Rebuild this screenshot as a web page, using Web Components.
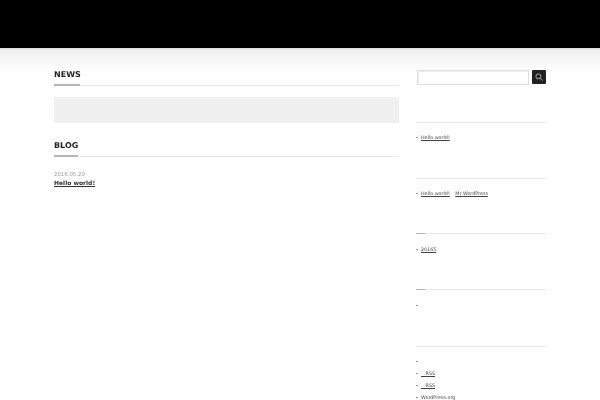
<!DOCTYPE html>
<html><head><meta charset="utf-8"><style>
html,body{margin:0;padding:0;background:#fff;height:400px;overflow:hidden}
body{font-family:"DejaVu Sans",sans-serif;color:#333}
</style></head><body>
<site-header></site-header>
<page-layout>
  <div slot="main">
    <section-heading bar="26">NEWS</section-heading>
    <empty-box></empty-box>
    <section-heading bar="24" style="margin-top:17px">BLOG</section-heading>
    <blog-entry date="2016.05.20">Hello world!</blog-entry>
  </div>
  <div slot="side">
    <search-box></search-box>
    <side-widget height="56" top="37"><side-item>Hello world!</side-item></side-widget>
    <side-widget height="55"><side-item also="Mr WordPress">Hello world!</side-item></side-widget>
    <side-widget height="56" mark pad="11"><side-item>20165</side-item></side-widget>
    <side-widget height="57" mark pad="11"><side-item></side-item></side-widget>
    <side-widget pad="10"><side-item></side-item><side-item>&nbsp;&nbsp;&nbsp;RSS</side-item><side-item>&nbsp;&nbsp;&nbsp;RSS</side-item><side-item>WordPress.org</side-item></side-widget>
  </div>
</page-layout>
<script>
function def(name, css, html, setup){
  customElements.define(name, class extends HTMLElement{
    connectedCallback(){
      if(this.shadowRoot) return;
      const r=this.attachShadow({mode:'open'});
      r.innerHTML='<style>'+css+'</style>'+html;
      if(setup) setup(this,r);
    }
  });
}
def('site-header',`:host{display:block}
.bar{height:48px;background:#000;border-bottom:1px solid #ddd}
.fade{height:22px;background:linear-gradient(#eeeeee,#fff)}`,`<div class="bar"></div><div class="fade"></div>`);
def('page-layout',`:host{display:flex;justify-content:space-between;width:492px;margin:-2px 0 0 54px;height:331px;overflow:hidden;align-items:flex-start}
.m{width:345px;display:block}.s{width:130px;margin-right:-1px;margin-top:1px}`,
`<div class="m"><slot name="main"></slot></div><div class="s"><slot name="side"></slot></div>`);
def('section-heading',`:host{display:block;text-rendering:geometricPrecision}
h2{margin:0;font:bold 8px/10px "DejaVu Sans",sans-serif;color:#222;box-sizing:border-box;height:15px;padding-top:1px;filter:blur(.2px)}
.l{display:flex;height:2px}
.a{background:#b5b5b5}.b{flex:1;height:1px;background:#e6e6e6;margin-top:1px}`,
`<h2><slot></slot></h2><div class="l"><div class="a"></div><div class="b"></div></div>`,
(h,r)=>{r.querySelector('.a').style.width=h.getAttribute('bar')+'px'});
def('empty-box',`:host{display:block;height:26px;margin-top:11px;background:#f0f0f0}`,'');
def('blog-entry',`:host{display:block;margin-top:13px;text-rendering:geometricPrecision;filter:blur(.2px)}
time{display:block;font:5.4px/10px "DejaVu Sans",sans-serif;color:#999}
a{display:block;font:bold 6px/8px "DejaVu Sans",sans-serif;color:#333;text-decoration:underline}`,
`<time></time><a><slot></slot></a>`,(h,r)=>{r.querySelector('time').textContent=h.getAttribute('date')});
def('search-box',`:host{display:flex;justify-content:space-between;align-items:flex-start;height:15px;width:130px}
.i{box-sizing:border-box;width:112px;height:15px;border:1px solid #ddd;box-shadow:inset 1px 1px 0 #eee;background:#fff}
.b{width:14px;height:14px;margin-right:1px;background:#222;border-radius:1px;display:flex;align-items:center;justify-content:center}`,
`<div class="i"></div><div class="b"><svg width="8" height="8" viewBox="0 0 9 9" fill="none" stroke="#ddd" stroke-width=".8"><circle cx="3.8" cy="3.8" r="2.8"/><path d="M5.9 5.9L8.5 8.5"/></svg></div>`);
def('side-widget',`:host{display:block;box-sizing:border-box}
.l{display:flex;height:1px;margin-left:-1px}.a{width:10px}.b{flex:1;background:#e6e6e6}
.c{padding-top:10px}`,
`<div class="l"><div class="a"></div><div class="b"></div></div><div class="c"><slot></slot></div>`,
(h,r)=>{
  if(h.hasAttribute('height')) h.style.height=h.getAttribute('height')+'px';
  if(h.hasAttribute('top')) h.style.marginTop=h.getAttribute('top')+'px';
  if(h.hasAttribute('pad')) r.querySelector('.c').style.paddingTop=h.getAttribute('pad')+'px';
  r.querySelector('.a').style.background=h.hasAttribute('mark')?'#b5b5b5':'#e6e6e6';
});
def('side-item',`:host{display:block;height:12px;font:4.8px/12px "DejaVu Sans",sans-serif;color:#444;text-rendering:geometricPrecision;filter:blur(.2px)}
.d{display:inline-block;width:2px;height:1px;background:#999;vertical-align:middle;margin-right:3px;margin-left:-1px}
u{text-decoration:underline}
.x{margin-left:5.5px}`,
`<span class="d"></span><u><slot></slot></u>`,
(h,r)=>{
  if(h.hasAttribute('also')){
    const u=document.createElement('u');
    u.className='x';
    u.textContent=h.getAttribute('also');
    r.appendChild(u);
  }
});
</script>
</body></html>
